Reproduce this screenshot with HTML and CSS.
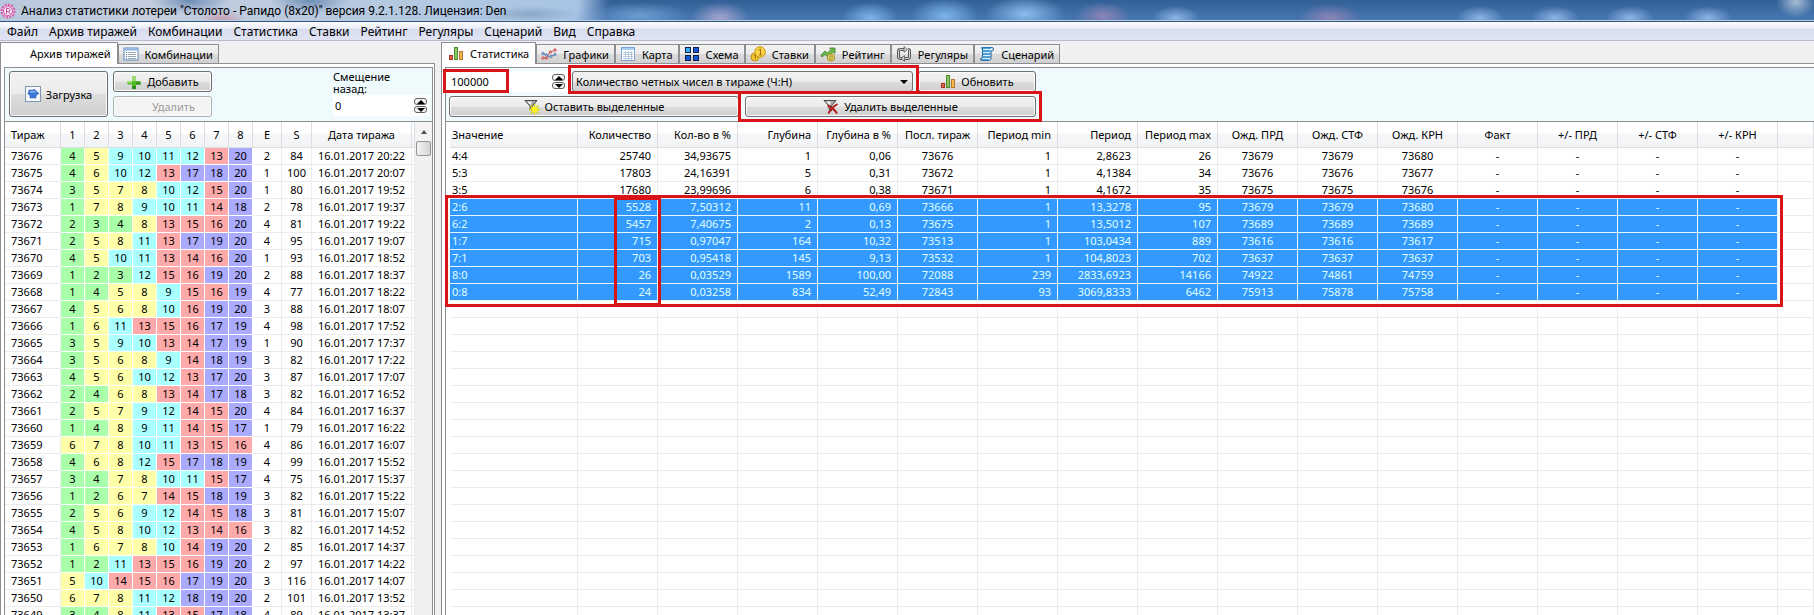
FILE: index.html
```html
<!DOCTYPE html>
<html lang="ru">
<head>
<meta charset="utf-8">
<title>Анализ статистики лотереи</title>
<link rel="stylesheet" href="styles.css">
</head>
<body>
<svg class="sprite" aria-hidden="true">
  <symbol id="i-bars" viewBox="0 0 16 16">
    <rect x="1.5" y="9.500" width="3" height="4" fill="#e0604c" stroke="#a83424"/>
    <rect x="6.500" y="1.500" width="3" height="12" fill="#8cc860" stroke="#4c8a34"/>
    <rect x="11.500" y="5.500" width="3" height="8" fill="#f4b850" stroke="#b4782c"/>
  </symbol>
  <symbol id="i-line" viewBox="0 0 16 16">
    <path d="M1 12 5 12 9 6 15 4" fill="none" stroke="#d86060"/>
    <path d="M1 7 5 9 9 11 14 8" fill="none" stroke="#5878b0"/>
    <g fill="#8fb0e0" stroke="#4c6aa0" stroke-width=".6"><circle cx="2" cy="7.500" r="1.300"/><circle cx="5.500" cy="9" r="1.300"/><circle cx="10" cy="10.500" r="1.300"/><circle cx="14" cy="8.500" r="1.300"/></g>
    <g fill="#f09090" stroke="#b83c3c" stroke-width=".6"><circle cx="2" cy="12" r="1.300"/><circle cx="5.500" cy="12" r="1.300"/><circle cx="9.500" cy="6" r="1.300"/><circle cx="14" cy="4" r="1.300"/></g>
  </symbol>
  <symbol id="i-list" viewBox="0 0 16 16">
    <rect x="1" y="2" width="14" height="12" fill="#fff" stroke="#5b87b8"/>
    <path d="M1.500 3.500h13" stroke="#86b4e4" stroke-width="2"/>
    <path d="M3 6.500h1M3 8.500h1M3 10.500h1M3 12.500h1" stroke="#4878b0"/>
    <path d="M5 6.500h8M5 8.500h8M5 10.500h8M5 12.500h8" stroke="#9aa8b8"/>
  </symbol>
  <symbol id="i-grid" viewBox="0 0 16 16">
    <rect x="1.500" y="1.500" width="13" height="13" fill="#fff" stroke="#7ba4d4"/>
    <path d="M2 3h12" stroke="#a8cdf2" stroke-width="2"/>
    <path d="M3 6.500h10M3 8.500h10M3 10.500h10M3 12.500h10M5.500 5v9M8.500 5v9M11.500 5v9" stroke="#a9c0d8" stroke-width=".8"/>
  </symbol>
  <symbol id="i-scheme" viewBox="0 0 16 16">
    <g stroke="#102048"><rect x="1.500" y="1.500" width="5" height="5" fill="#30b0f0"/><rect x="9.500" y="1.500" width="5" height="5" fill="#1458d8"/><rect x="1.500" y="9.500" width="5" height="5" fill="#1458d8"/><rect x="9.500" y="9.500" width="5" height="5" fill="#1458d8"/></g>
  </symbol>
  <symbol id="i-coins" viewBox="0 0 16 16">
    <circle cx="5" cy="11" r="4" fill="#f4c430" stroke="#c08c10"/>
    <circle cx="10" cy="6" r="5.300" fill="#fbd44c" stroke="#c8940c"/>
    <path d="M8.500 4.500 10.500 3v6M8.800 9h3.400M4 10l1.500-1v4" fill="none" stroke="#a87408"/>
  </symbol>
  <symbol id="i-rating" viewBox="0 0 16 16">
    <path d="M1 9 5 5l2.500 2L11 3.500 9.500 2H15v5.500L13.200 6 8 11 5 8.500 2 11z" fill="#6cb848" stroke="#3c7c2c" stroke-width=".8"/>
    <circle cx="11" cy="11.500" r="3.700" fill="#e8d468" stroke="#a0882c"/>
    <circle cx="11" cy="11.500" r="1.600" fill="none" stroke="#8c9830"/>
  </symbol>
  <symbol id="i-cycle" viewBox="0 0 16 16">
    <path d="M7 12.500H4a1.500 1.500 0 0 1-1.500-1.500V5A1.500 1.500 0 0 1 4 3.500h5M9 12.500h3a1.500 1.500 0 0 0 1.500-1.500V5A1.500 1.500 0 0 0 12 3.500" fill="none" stroke="#5c5c5c" stroke-width="3"/>
    <path d="M7 12.500H4a1.500 1.500 0 0 1-1.500-1.500V5A1.500 1.500 0 0 1 4 3.500h5M9 12.500h3a1.500 1.500 0 0 0 1.500-1.500V5A1.500 1.500 0 0 0 12 3.500" fill="none" stroke="#d0d0d0"/>
    <path d="M8 .7l3.500 2.800L8 6.300zM8.500 9.700 5 12.500l3.500 2.800z" fill="#d0d0d0" stroke="#5c5c5c" stroke-width=".8"/>
  </symbol>
  <symbol id="i-script" viewBox="0 0 16 16">
    <path d="M3.500 1.500h9.500c2 0 2 3.500 0 3.500h-1v6.500c0 2-1 3-2.500 3h-7c-1.400 0-1.400-2.500 0-2.500h1z" fill="#d8f0ff" stroke="#1c5c94"/>
    <path d="M2 2h10M3 5h8.500M3 8h8.500M3 11h8.500M2 14h8" stroke="#2484c4" stroke-width="1.400"/>
  </symbol>
  <symbol id="i-load" viewBox="0 0 16 16">
    <rect x=".5" y=".5" width="15" height="15" fill="#f6f8fb" stroke="#8096b4"/>
    <path d="M4 4h5V3l5 4.500-3 2V12H5V9.500L3 8z" fill="#3c78d8" stroke="#2458a8" stroke-width=".5"/>
    <path d="M5 5h5l1 1.500H5z" fill="#90bcf4"/>
  </symbol>
  <symbol id="i-plus" viewBox="0 0 16 16">
    <path d="M6 2.500h4V7h4.500v3.500H10V15H6v-4.500H1.500V7H6z" fill="#58b82c"/>
    <path d="M6 2.500h4V7H6zM1.500 7H6v2H1.500z" fill="#98dc70"/>
    <path d="M10 10.500h4.500V8.500H10zM6 12h4v3H6z" fill="#2c8c14"/>
  </symbol>
  <symbol id="i-keep" viewBox="0 0 16 16">
    <path d="M1 1.500h12L8.500 7v5L6 10V7z" fill="#a8a8a8" stroke="#484848"/>
    <path d="M3 2.500h5L6.500 6z" fill="#f0f0f0"/>
    <path d="M10.500 5v11M5 10.500h11M6.500 6.500l8 8M14.500 6.500l-8 8" stroke="#d8d000" stroke-width="1.300"/>
    <circle cx="10.500" cy="10.500" r="3" fill="#fcf420"/>
  </symbol>
  <symbol id="i-drop" viewBox="0 0 16 16">
    <path d="M1 1.500h12L8.500 7v5L6 10V7z" fill="#a8a8a8" stroke="#484848"/>
    <path d="M3 2.500h5L6.500 6z" fill="#f0f0f0"/>
    <path d="M4.500 6.500c4 1.500 7 4 9.500 8M14.500 5C10.500 7.500 7 10.500 5.500 14.500" fill="none" stroke="#b01818" stroke-width="2"/>
  </symbol>
</svg>

<header class="titlebar">
  <svg class="app-icon" viewBox="0 0 16 16"><circle cx="8" cy="8" r="6.300" fill="#f6d4ee" stroke="#d468b4" stroke-width="2.400" stroke-dasharray="2.200 1"/><circle cx="8" cy="8" r="4.500" fill="#fdf0fa" stroke="#cc58a8"/><path d="M6.500 11V5.500h2a1.500 1.500 0 0 1 0 3h-2M8.500 8.500l1.500 2.500" fill="none" stroke="#c04c9c"/></svg>
  <h1 class="title">Анализ статистики лотереи "Столото - Рапидо (8x20)" версия 9.2.1.128. Лицензия: Den</h1>
</header>

<nav class="menu">
  <button>Файл</button><button>Архив тиражей</button><button>Комбинации</button><button>Статистика</button><button>Ставки</button><button>Рейтинг</button><button>Регуляры</button><button>Сценарий</button><button>Вид</button><button>Справка</button>
</nav>

<main class="workspace">
  <section class="pane pane-archive">
    <div class="tabs" role="tablist">
      <button class="tab active no-icon" role="tab" aria-selected="true">Архив тиражей</button>
      <button class="tab" role="tab"><svg class="icon"><use href="#i-list"/></svg>Комбинации</button>
    </div>
    <div class="page">
      <div class="panel">
        <div class="toolbar archive-tools">
          <button class="btn load"><svg class="icon"><use href="#i-load"/></svg>Загрузка</button>
          <div class="stack">
            <button class="btn"><svg class="icon"><use href="#i-plus"/></svg>Добавить</button>
            <button class="btn no-icon" disabled>Удалить</button>
          </div>
          <div class="offset">
            <label for="offset">Смещение назад:</label>
            <div class="spin">
              <input id="offset" type="text" value="0">
              <span class="arrows"><button aria-label="Больше"></button><button aria-label="Меньше"></button></span>
            </div>
          </div>
        </div>
        <div class="grid with-scroll">
          <div class="grid-body">
            <table class="draws">
              <colgroup><col class="c-id"><col span="8" class="c-num"><col class="c-e"><col class="c-s"><col class="c-date"><col></colgroup>
              <thead><tr><th>Тираж</th><th>1</th><th>2</th><th>3</th><th>4</th><th>5</th><th>6</th><th>7</th><th>8</th><th>E</th><th>S</th><th>Дата тиража</th><th></th></tr></thead>
              <tbody id="draws"></tbody>
            </table>
          </div>
          <div class="scrollbar"><button class="scroll-up" aria-label="Вверх"></button><span class="thumb"></span></div>
        </div>
      </div>
    </div>
  </section>

  <section class="pane pane-stats">
    <div class="tabs" role="tablist">
      <button class="tab active" role="tab" aria-selected="true"><svg class="icon"><use href="#i-bars"/></svg>Статистика</button>
      <button class="tab" role="tab"><svg class="icon"><use href="#i-line"/></svg>Графики</button>
      <button class="tab" role="tab"><svg class="icon"><use href="#i-grid"/></svg>Карта</button>
      <button class="tab" role="tab"><svg class="icon"><use href="#i-scheme"/></svg>Схема</button>
      <button class="tab" role="tab"><svg class="icon"><use href="#i-coins"/></svg>Ставки</button>
      <button class="tab" role="tab"><svg class="icon"><use href="#i-rating"/></svg>Рейтинг</button>
      <button class="tab" role="tab"><svg class="icon"><use href="#i-cycle"/></svg>Регуляры</button>
      <button class="tab" role="tab"><svg class="icon"><use href="#i-script"/></svg>Сценарий</button>
    </div>
    <div class="page">
      <div class="panel">
        <div class="toolbar stats-tools">
          <div class="tool-row">
            <div class="spin count">
              <input id="count" type="text" value="100000" aria-label="Количество тиражей">
              <span class="arrows"><button aria-label="Больше"></button><button aria-label="Меньше"></button></span>
              <span class="mark mark-count"></span>
            </div>
            <div class="combo">
              <select aria-label="Вид статистики"><option>Количество четных чисел в тираже (Ч:Н)</option></select>
              <span class="mark mark-combo"></span>
            </div>
            <button class="btn refresh"><svg class="icon"><use href="#i-bars"/></svg>Обновить</button>
          </div>
          <div class="tool-row">
            <button class="btn keep"><svg class="icon"><use href="#i-keep"/></svg>Оставить выделенные</button>
            <div class="drop">
              <button class="btn"><svg class="icon"><use href="#i-drop"/></svg>Удалить выделенные</button>
              <span class="mark mark-drop"></span>
            </div>
          </div>
        </div>
        <div class="grid">
          <div class="grid-body">
            <table class="stats">
              <colgroup><col class="c-value"><col span="15" class="c-stat"><col></colgroup>
              <thead><tr><th class="l">Значение</th><th>Количество</th><th>Кол-во в %</th><th>Глубина</th><th>Глубина в %</th><th class="c">Посл. тираж</th><th>Период min</th><th>Период</th><th>Период max</th><th class="c">Ожд. ПРД</th><th class="c">Ожд. СТФ</th><th class="c">Ожд. КРН</th><th class="c">Факт</th><th class="c">+/- ПРД</th><th class="c">+/- СТФ</th><th class="c">+/- КРН</th><th></th></tr></thead>
              <tbody id="stats"></tbody>
            </table>
            <span class="mark mark-rows"></span>
            <span class="mark mark-cells"></span>
          </div>
        </div>
      </div>
    </div>
  </section>
</main>
<script src="app.js"></script>
</body>
</html>
```

FILE: styles.css
```css
* { box-sizing: border-box; }

html, body { margin: 0; height: 100%; }

body {
  display: flex;
  flex-direction: column;
  overflow: hidden;
  background: #f0f0f0;
  color: #000;
  font: 11px/13px "Noto Sans", "Open Sans", sans-serif;
}

button, input, select { font: inherit; color: inherit; margin: 0; }

.sprite { position: absolute; width: 0; height: 0; }
.icon { width: 16px; height: 16px; flex: none; }

.titlebar {
  display: flex;
  align-items: center;
  gap: 5px;
  flex: none;
  height: 22px;
  border-bottom: 1px solid #34547c;
  box-shadow: inset 0 -1px #b4cce4;
  background:
    radial-gradient(ellipse 40px 14px at 190px 0, #6c8cb4, transparent),
    radial-gradient(ellipse 40px 14px at 310px 0, #6c8cb4, transparent),
    radial-gradient(ellipse 24px 10px at 222px 20px, #c89cb0, transparent),
    radial-gradient(ellipse 50px 8px at 530px 14px, #8ca8c8, transparent),
    linear-gradient(100deg, #b8c8dc 0, #c4cede 150px, #b4c8e0 400px, #a8c4e4 570px, transparent 600px),
    radial-gradient(ellipse 50px 14px at 640px 16px, #6c9cd0, transparent),
    radial-gradient(ellipse 30px 16px at 720px 18px, #a4a4cc, transparent),
    radial-gradient(ellipse 28px 16px at 870px 18px, #7cb4e8, transparent),
    radial-gradient(ellipse 34px 18px at 945px 16px, #7cb4e8, transparent),
    radial-gradient(ellipse 40px 18px at 1025px 14px, #8cbcec, transparent),
    radial-gradient(ellipse 28px 14px at 1103px 16px, #8c84b4, transparent),
    radial-gradient(ellipse 24px 12px at 1176px 18px, #8cb4e4, transparent),
    radial-gradient(ellipse 32px 14px at 1330px 18px, #8c84b4, transparent),
    radial-gradient(ellipse 24px 12px at 1480px 18px, #8cb4e4, transparent),
    radial-gradient(ellipse 24px 12px at 1555px 18px, #8cb4e4, transparent),
    radial-gradient(ellipse 24px 12px at 1630px 18px, #8cb4e4, transparent),
    radial-gradient(ellipse 24px 12px at 1708px 18px, #8cb4e4, transparent),
    radial-gradient(ellipse 20px 16px at 1796px 2px, #a4bcd4, transparent),
    linear-gradient(#325f95, #4878b4);
}
.app-icon { width: 16px; height: 16px; flex: none; }
.title { margin: 0; font-family: Roboto, "Noto Sans", sans-serif; font-size: 12px; font-weight: 400; line-height: 16px; white-space: nowrap; }

.menu {
  display: flex;
  flex: none;
  height: 19px;
  padding-left: 2px;
  border-bottom: 1px solid #b6bccc;
  background: linear-gradient(#fcfcfe 0, #eceef8 6px, #d8dcf0 7px, #e0e4f4 100%);
}
.menu button { padding: 1px 11px 0 0; border: 0; background: none; font-size: 12px; line-height: 18px; }
.menu button:first-child { padding-left: 5px; }

.workspace { display: flex; flex: 1; gap: 6px; min-height: 0; }
.pane { display: flex; flex-direction: column; min-width: 0; min-height: 0; padding-top: 1px; }
.pane-archive { flex: 0 0 435px; }
.pane-stats { flex: 1; }

.tabs { display: flex; align-items: flex-end; flex: none; height: 21px; }
.tab {
  display: flex;
  align-items: center;
  gap: 6px;
  height: 19px;
  padding: 0 5px 0 4px;
  border: 1px solid #8c8e94;
  border-bottom: 0;
  background: linear-gradient(#f3f3f3, #ebebeb 50%, #dcdcdc 50%, #d0d0d0);
  white-space: nowrap;
}
.tab.active { position: relative; z-index: 1; height: 22px; margin-bottom: -1px; padding: 0 6px; background: #fff; }
.tab.no-icon { padding-left: 29px; }

.page {
  display: flex;
  flex: 1;
  min-height: 0;
  padding: 3px 0 0 3px;
  border: 1px solid #8c8e94;
  border-bottom: 0;
  background: #fff;
}
.pane-archive .page { padding-right: 1px; }
.pane-stats .page { border-right: 0; }
.panel {
  display: flex;
  flex: 1;
  flex-direction: column;
  min-width: 0;
  border: 1px solid #8c8e94;
  border-bottom: 0;
}
.pane-stats .panel { border-right: 0; }

.toolbar { flex: none; height: 53px; background: #effafd; }

.btn {
  display: flex;
  align-items: center;
  justify-content: center;
  gap: 5px;
  height: 21px;
  padding: 0 8px;
  border: 1px solid #707070;
  border-radius: 3px;
  background: linear-gradient(#f2f2f2, #ebebeb 50%, #dddddd 50%, #cfcfcf);
  box-shadow: inset 0 0 0 1px #fafafa;
  white-space: nowrap;
}
.btn:disabled { border-color: #adb2b5; background: #f4f4f4; color: #9a9a9a; }
.btn.no-icon { padding-left: 30px; }

.archive-tools { display: flex; gap: 5px; padding: 3px 2px 0 4px; }
.load { width: 99px; height: 46px; }
.stack { display: flex; flex-direction: column; gap: 4px; width: 99px; }
.offset { width: 97px; margin-left: auto; }
.offset label { display: block; width: 70px; line-height: 12px; }

.spin { position: relative; display: flex; align-items: center; height: 21px; padding-right: 3px; background: #fff; }
.spin input { flex: 1; min-width: 0; height: 100%; padding: 0 2px; border: 0; background: none; outline: 0; }
.arrows { display: flex; flex-direction: column; gap: 1px; }
.arrows button {
  display: flex;
  align-items: center;
  justify-content: center;
  width: 13px;
  height: 7px;
  padding: 0;
  border: 1px solid #606060;
  border-radius: 3px;
  background: #f4f4f4;
}
.arrows button::before { content: ""; border: 4px solid transparent; border-top: 0; border-bottom: 4px solid #000; }
.arrows button + button::before { border-bottom: 0; border-top: 4px solid #000; }

.stats-tools { display: flex; flex-direction: column; gap: 4px; padding-top: 3px; }
.tool-row { display: flex; height: 21px; }
.count { width: 122px; padding-left: 3px; }
.combo { position: relative; width: 341px; margin-left: 4px; }
.combo::after {
  content: "";
  position: absolute;
  top: 9px;
  right: 5px;
  border: 4px solid transparent;
  border-top-color: #000;
  border-bottom: 0;
}
.combo select {
  width: 100%;
  height: 21px;
  padding: 0 3px;
  appearance: none;
  border: 1px solid #707070;
  border-radius: 3px;
  background: linear-gradient(#f2f2f2, #ebebeb 50%, #dddddd 50%, #cfcfcf);
}
.refresh { width: 118px; margin-left: 5px; }
.keep { width: 290px; margin-left: 3px; }
.drop { position: relative; width: 291px; margin-left: 6px; }
.drop .btn { width: 100%; }

.mark { position: absolute; z-index: 2; border: 3px solid #d81418; pointer-events: none; }
.mark-count { top: -2px; left: -3px; width: 66px; height: 24px; }
.mark-combo { inset: -6px -6px -2px -4px; }
.mark-drop { inset: -5px -6px -5px -7px; }
.mark-rows { top: 73px; left: -1px; width: 1338px; height: 112px; }
.mark-cells { top: 75px; left: 168px; width: 47px; height: 109px; }

.grid { display: flex; flex: 1; min-height: 0; border-top: 1px solid #8c8e94; background: #fff; }
.grid-body { position: relative; flex: 1; min-width: 0; overflow: hidden; }
.pane-stats .grid-body { overflow: visible; }

table { width: 100%; table-layout: fixed; border-spacing: 0; }
th, td { overflow: hidden; white-space: nowrap; border: 0 solid #ececec; }
th {
  height: 26px;
  padding: 0;
  border-width: 0 1px 1px 0;
  border-color: #dcdee2;
  background: linear-gradient(#fff 45%, #f6f7f9 50%, #f2f3f5);
  font-weight: 400;
}
td { height: 17px; padding: 0; border-width: 0 1px 1px 0; text-align: center; line-height: 16px; }

.c-id { width: 56px; }
.c-num { width: 24px; }
.c-e { width: 29px; }
.c-s { width: 30px; }
.c-date { width: 100px; }
.draws th:first-child, .draws td:first-child { padding-left: 6px; text-align: left; }
.draws td[class] { border-color: #fff; }
.low { background: #aaffaa; }
.mid { background: #ffffaa; }
.high { background: #aaffff; }
.upper { background: #ffaaaa; }
.top { background: #aaaaff; }
td.low, td.mid, td.high, td.upper, td.top { background-clip: padding-box; }

.stats { width: calc(100% - 4px); margin-left: 4px; }
.c-value { width: 128px; }
.c-stat { width: 80px; }
.stats th, .stats td { padding: 0 6px 0 2px; text-align: right; }
.stats .l { text-align: left; }
.stats .c { padding: 0; text-align: center; }
.selected td { border-color: #e4f6ff; background: #3399ff; color: #e0ffff; }
.selected td:last-child { background: #fff; border-color: #ececec; }

.scrollbar { display: flex; flex: 0 0 17px; flex-direction: column; align-items: center; background: #f0f0f0; }
.scroll-up { width: 17px; height: 19px; padding: 0; border: 0; background: #f4f4f4; }
.scroll-up::before { content: ""; display: block; width: 0; margin: 0 auto; border: 3px solid transparent; border-top: 0; border-bottom: 4px solid #505050; }
.thumb { width: 15px; height: 15px; border: 1px solid #949494; border-radius: 2px; background: linear-gradient(90deg, #f2f2f2, #d4d4d4); }
```

FILE: app.js
```js
const draws = `73676 4 5 9 10 11 12 13 20 2 84 20:22
73675 4 6 10 12 13 17 18 20 1 100 20:07
73674 3 5 7 8 10 12 15 20 1 80 19:52
73673 1 7 8 9 10 11 14 18 2 78 19:37
73672 2 3 4 8 13 15 16 20 4 81 19:22
73671 2 5 8 11 13 17 19 20 4 95 19:07
73670 4 5 10 11 13 14 16 20 1 93 18:52
73669 1 2 3 12 15 16 19 20 2 88 18:37
73668 1 4 5 8 9 15 16 19 4 77 18:22
73667 4 5 6 8 10 16 19 20 3 88 18:07
73666 1 6 11 13 15 16 17 19 4 98 17:52
73665 3 5 9 10 13 14 17 19 1 90 17:37
73664 3 5 6 8 9 14 18 19 3 82 17:22
73663 4 5 6 10 12 13 17 20 3 87 17:07
73662 2 4 6 8 13 14 17 18 3 82 16:52
73661 2 5 7 9 12 14 15 20 4 84 16:37
73660 1 4 8 9 11 14 15 17 1 79 16:22
73659 6 7 8 10 11 13 15 16 4 86 16:07
73658 4 6 8 12 15 17 18 19 4 99 15:52
73657 3 4 7 8 10 11 15 17 4 75 15:37
73656 1 2 6 7 14 15 18 19 3 82 15:22
73655 2 5 6 9 12 14 15 18 3 81 15:07
73654 4 5 8 10 12 13 14 16 3 82 14:52
73653 1 6 7 8 10 14 19 20 2 85 14:37
73652 1 2 11 13 15 16 19 20 2 97 14:22
73651 5 10 14 15 16 17 19 20 3 116 14:07
73650 6 7 8 11 12 18 19 20 2 101 13:52
73649 3 4 8 11 13 15 17 18 4 89 13:37`;

const bands = ["low", "mid", "high", "upper", "top"];

document.getElementById("draws").innerHTML = draws.split("\n").map((line) => {
  const f = line.split(" ");
  const balls = f.slice(1, 9).map((n) => `<td class="${bands[Math.floor((n - 1) / 4)]}">${n}</td>`).join("");
  return `<tr><td>${f[0]}</td>${balls}<td>${f[9]}</td><td>${f[10]}</td><td>16.01.2017 ${f[11]}</td><td></td></tr>`;
}).join("");

const stats = `4:4 25740 34,93675 1 0,06 73676 1 2,8623 26 73679 73679 73680
5:3 17803 24,16391 5 0,31 73672 1 4,1384 34 73676 73676 73677
3:5 17680 23,99696 6 0,38 73671 1 4,1672 35 73675 73675 73676
2:6 5528 7,50312 11 0,69 73666 1 13,3278 95 73679 73679 73680
6:2 5457 7,40675 2 0,13 73675 1 13,5012 107 73689 73689 73689
1:7 715 0,97047 164 10,32 73513 1 103,0434 889 73616 73616 73617
7:1 703 0,95418 145 9,13 73532 1 104,8023 702 73637 73637 73637
8:0 26 0,03529 1589 100,00 72088 239 2833,6923 14166 74922 74861 74759
0:8 24 0,03258 834 52,49 72843 93 3069,8333 6462 75913 75878 75758`;

const centered = [5, 9, 10, 11, 12, 13, 14, 15];
const cell = (text, i) => {
  const cls = i === 0 ? "l" : centered.includes(i) ? "c" : "";
  return `<td class="${cls}">${text}</td>`;
};
const filled = stats.split("\n").map((line, r) => {
  const f = [...line.split(" "), "-", "-", "-", "-", ""];
  return `<tr class="${r > 2 ? "selected" : ""}">${f.map(cell).join("")}</tr>`;
});
const blank = Array.from({ length: 19 }, () => `<tr>${"<td></td>".repeat(17)}</tr>`);
document.getElementById("stats").innerHTML = filled.concat(blank).join("");
```
